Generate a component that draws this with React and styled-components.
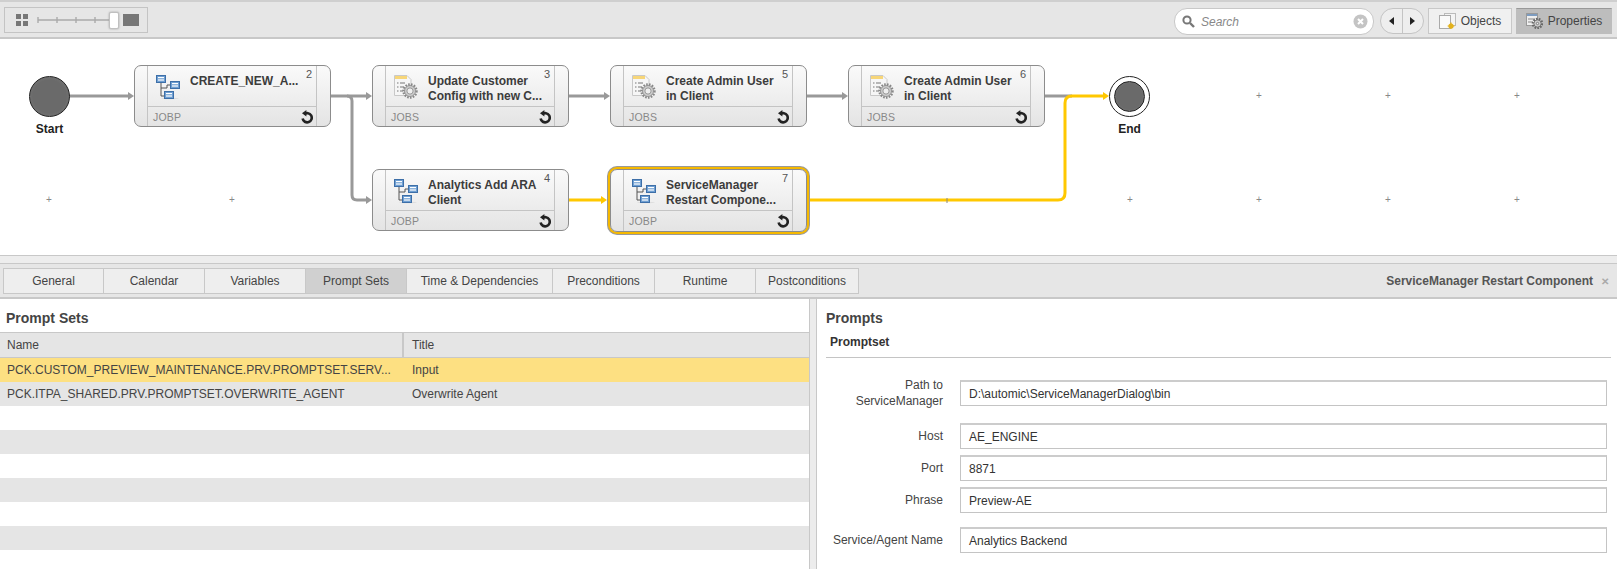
import React from 'react'
import styled, { createGlobalStyle } from 'styled-components'

const GlobalStyle = createGlobalStyle`
	html, body { margin: 0; padding: 0; background: #fff; }
	body { font-family: "Liberation Sans", Arial, sans-serif; font-size: 12px; color: #333; }
	* { box-sizing: border-box; }
`

const GREY = '#999'
const YELLOW = '#ffc800'

const nodes = [
	{ id: 2, x: 134, y: 65, lines: ['CREATE_NEW_A...'], type: 'JOBP' },
	{ id: 3, x: 372, y: 65, lines: ['Update Customer', 'Config with new C...'], type: 'JOBS' },
	{ id: 5, x: 610, y: 65, lines: ['Create Admin User', 'in Client'], type: 'JOBS' },
	{ id: 6, x: 848, y: 65, lines: ['Create Admin User', 'in Client'], type: 'JOBS' },
	{ id: 4, x: 372, y: 169, lines: ['Analytics Add ARA', 'Client'], type: 'JOBP' },
	{ id: 7, x: 610, y: 169, lines: ['ServiceManager', 'Restart Compone...'], type: 'JOBP', selected: true },
]

const plusMarks = [
	[49, 200], [232, 200], [1130, 200], [1259, 200], [1388, 200], [1517, 200],
	[1259, 96], [1388, 96], [1517, 96],
]

const tabs = ['General', 'Calendar', 'Variables', 'Prompt Sets', 'Time & Dependencies', 'Preconditions', 'Runtime', 'Postconditions']
const tabWidths = [101, 101, 101, 101, 146, 102, 101, 103]

const promptRows = [
	['PCK.CUSTOM_PREVIEW_MAINTENANCE.PRV.PROMPTSET.SERV...', 'Input'],
	['PCK.ITPA_SHARED.PRV.PROMPTSET.OVERWRITE_AGENT', 'Overwrite Agent'],
	['', ''], ['', ''], ['', ''], ['', ''], ['', ''], ['', ''], ['', ''],
]

const fields = [
	{ label: 'Path to ServiceManager', value: 'D:\\automic\\ServiceManagerDialog\\bin', gap: 14 },
	{ label: 'Host', value: 'AE_ENGINE', gap: 6 },
	{ label: 'Port', value: '8871', gap: 6 },
	{ label: 'Phrase', value: 'Preview-AE', gap: 14 },
	{ label: 'Service/Agent Name', value: 'Analytics Backend', gap: 0 },
]

const WorkflowIcon = () => (
	<svg width="25" height="25" viewBox="0 0 25 25">
		<path d="M5 8V21H9M5 13H11M15 12V9" fill="none" stroke="#555" strokeWidth="1" />
		<path d="M11 13V10H14" fill="none" stroke="#555" strokeWidth="1" />
		<ellipse cx="14" cy="23.5" rx="9" ry="0.8" fill="#ddd" />
		{[[0, 0], [14, 6], [8, 16]].map(([x, y]) => (
			<g key={x}>
				<rect x={x + 0.5} y={y + 0.5} width="9" height="7" fill="#6f9fd2" stroke="#3d6fa8" />
				<rect x={x + 2} y={y + 2} width="6" height="1.2" fill="#fff" />
				<rect x={x + 2} y={y + 4.4} width="6" height="1.2" fill="#fff" />
			</g>
		))}
	</svg>
)

const Gear = ({ cx, cy, r, color = '#888' }) => (
	<g>
		<circle cx={cx} cy={cy} r={r} fill="none" stroke={color} strokeWidth="2.4" strokeDasharray="1.6 1.2" />
		<circle cx={cx} cy={cy} r={r - 1} fill="#ccc" stroke={color} strokeWidth="0.8" />
		<circle cx={cx} cy={cy} r={r - 3.4 > 1 ? r - 3.4 : 1} fill="#eee" stroke={color} strokeWidth="0.8" />
	</g>
)

const JobIcon = () => (
	<svg width="25" height="25" viewBox="0 0 25 25">
		<path d="M0.5 0.5H13L17 4.5V20.5H0.5Z" fill="#f6f6f6" stroke="#c8c8c8" />
		<rect x="1" y="1" width="12" height="3" fill="#f7d679" />
		<path d="M3 8H4.5M6 8H11M3 12H4.5M6 12H10M3 16H4.5M6 16H9" stroke="#777" strokeWidth="1" />
		<Gear cx={16} cy={16} r={6.5} />
	</svg>
)

const RefreshIcon = () => (
	<svg width="13" height="14" viewBox="0 0 13 14">
		<path d="M3.6 3.6A4.6 4.6 0 1 1 2 8" fill="none" stroke="#222" strokeWidth="2.6" transform="translate(0.6 0.6)" />
		<path d="M6.4 0V6.6L2 3.3Z" fill="#222" />
	</svg>
)

const Connectors = () => (
	<ConnectorLayer width="1617" height="216" viewBox="0 39 1617 216">
		<g fill="none" stroke={GREY} strokeWidth="3">
			<path d="M69 96H130" />
			<path d="M331 96H368" />
			<path d="M347 96Q352 96 352 101V195Q352 200 357 200H368" />
			<path d="M569 96H606" />
			<path d="M807 96H844" />
			<path d="M1045 96H1072" />
		</g>
		<g fill={GREY}>
			<path d="M128 92L134 96L128 100Z" />
			<path d="M366 92L372 96L366 100Z" />
			<path d="M366 196L372 200L366 204Z" />
			<path d="M604 92L610 96L604 100Z" />
			<path d="M842 92L848 96L842 100Z" />
		</g>
		<g fill="none" stroke={YELLOW} strokeWidth="3">
			<path d="M569 200H602" />
			<path d="M809 200H1058Q1065 200 1065 193V103Q1065 96 1072 96H1104" />
		</g>
		<g fill={YELLOW}>
			<path d="M601 196L607 200L601 204Z" />
			<path d="M1103 92L1109 96L1103 100Z" />
		</g>
		<path d="M947 198V203" stroke="#888" strokeWidth="1" />
	</ConnectorLayer>
)

const FlowNode = ({ x, y, id, lines, type, selected }) => (
	<Node $x={x} $y={y} $selected={selected}>
		<Rail />
		<NodeMain>
			<NodeBody>
				<NodeIcon>{type === 'JOBP' ? <WorkflowIcon /> : <JobIcon />}</NodeIcon>
				<NodeTitle>{lines.map((l) => <div key={l}>{l}</div>)}</NodeTitle>
				<NodeNumber>{id}</NodeNumber>
			</NodeBody>
			<NodeFooter>
				<span>{type}</span>
				<RefreshIcon />
			</NodeFooter>
		</NodeMain>
		<Rail $right />
	</Node>
)

const App = () => {
	return (
		<Page>
			<GlobalStyle />
			<Toolbar>
				<ZoomBox>
					<svg width="12" height="12" viewBox="0 0 12 12" fill="#777">
						<rect width="5" height="5" /><rect x="7" width="5" height="5" />
						<rect y="7" width="5" height="5" /><rect x="7" y="7" width="5" height="5" />
					</svg>
					<svg width="72" height="8" viewBox="0 0 72 8">
						<path d="M1 4H72M1 1V7M20 1V7M39 1V7M58 1V7" stroke="#aaa" strokeWidth="1.4" fill="none" />
					</svg>
					<ZoomHandle />
					<ZoomBlock />
				</ZoomBox>
				<ToolbarRight>
					<SearchBox>
						<svg width="13" height="13" viewBox="0 0 13 13">
							<circle cx="5" cy="5" r="3.6" fill="none" stroke="#777" strokeWidth="2" />
							<path d="M8 8L12 12" stroke="#777" strokeWidth="2.4" />
						</svg>
						<SearchHint>Search</SearchHint>
						<svg width="15" height="15" viewBox="0 0 15 15">
							<circle cx="7.5" cy="7.5" r="7" fill="#c4c4c4" />
							<path d="M5 5L10 10M10 5L5 10" stroke="#fff" strokeWidth="2" />
						</svg>
					</SearchBox>
					<NavPill>
						<NavPart>
							<svg width="5" height="8" viewBox="0 0 5 8"><path d="M5 0V8L0 4Z" fill="#222" /></svg>
						</NavPart>
						<NavPart $last>
							<svg width="5" height="8" viewBox="0 0 5 8"><path d="M0 0V8L5 4Z" fill="#222" /></svg>
						</NavPart>
					</NavPill>
					<ToggleButton $w={84}>
						<svg width="17" height="16" viewBox="0 0 17 16">
							<rect x="5.5" y="0.5" width="11" height="12" fill="#f4f4f4" stroke="#bbb" />
							<rect x="0.5" y="2.5" width="11" height="13" fill="#fafafa" stroke="#aaa" />
							<circle cx="12" cy="13" r="2.6" fill="#e3b21c" />
							<path d="M8.6 13H15.4M12 9.6V15.9" stroke="#e3b21c" strokeWidth="1.2" />
						</svg>
						Objects
					</ToggleButton>
					<ToggleButton $w={96} $active>
						<svg width="17" height="16" viewBox="0 0 17 16">
							<rect x="0.5" y="0.5" width="11" height="12" fill="#eee" stroke="#999" />
							<rect x="1" y="1" width="10" height="2" fill="#7d9cc0" />
							<path d="M2 6H9M2 9H7" stroke="#888" />
							<Gear cx={11.5} cy={10.5} r={4.6} color="#666" />
						</svg>
						Properties
					</ToggleButton>
				</ToolbarRight>
			</Toolbar>

			<Canvas>
				<Connectors />
				{plusMarks.map(([x, y]) => <Plus key={`${x}-${y}`} $x={x} $y={y}>+</Plus>)}
				<Terminal $x={29}>
					<StartDisc />
					<TerminalLabel>Start</TerminalLabel>
				</Terminal>
				<Terminal $x={1109}>
					<EndRing><EndDisc /></EndRing>
					<TerminalLabel>End</TerminalLabel>
				</Terminal>
				{nodes.map((n) => <FlowNode key={n.id} {...n} />)}
			</Canvas>

			<Splitter><Grip /></Splitter>

			<TabStrip>
				<Tabs>
					{tabs.map((t, i) => <Tab key={t} $w={tabWidths[i]} $active={t === 'Prompt Sets'}>{t}</Tab>)}
				</Tabs>
				<ObjectName>
					ServiceManager Restart Component
					<CloseMark>✕</CloseMark>
				</ObjectName>
			</TabStrip>

			<Panes>
				<LeftPane>
					<PaneTitle>Prompt Sets</PaneTitle>
					<TableHead>
						<HeadCell $w={404}>Name</HeadCell>
						<HeadCell>Title</HeadCell>
					</TableHead>
					{promptRows.map(([name, title], i) => (
						<TableRow key={i} $selected={i === 0} $odd={i % 2 === 1}>
							<RowCell $w={404}>{name}</RowCell>
							<RowCell>{title}</RowCell>
						</TableRow>
					))}
				</LeftPane>
				<Gutter />
				<RightPane>
					<PaneTitle $flush>Prompts</PaneTitle>
					<SubTitle>Promptset</SubTitle>
					<FieldList>
						{fields.map((f) => (
							<FieldRow key={f.label} $gap={f.gap}>
								<FieldLabel>{f.label}</FieldLabel>
								<FieldValue>{f.value}</FieldValue>
							</FieldRow>
						))}
					</FieldList>
				</RightPane>
			</Panes>
		</Page>
	)
}

const Page = styled.div`
	width: 1617px;
	height: 569px;
	overflow: hidden;
	display: flex;
	flex-direction: column;
	background: #fff;
`

const Toolbar = styled.div`
	height: 39px;
	flex: none;
	display: flex;
	align-items: flex-start;
	justify-content: space-between;
	padding: 6px 5px 0 4px;
	background: #e6e6e6;
	border-top: 2px solid #cfcfcf;
	border-bottom: 2px solid #c8c8c8;
	margin-top: 0;
`

const ZoomBox = styled.div`
	width: 144px;
	height: 26px;
	margin-top: -1px;
	display: flex;
	align-items: center;
	padding-left: 11px;
	border: 1px solid #c4c4c4;
	svg:nth-child(2) { margin-left: 9px; }
`

const ZoomHandle = styled.div`
	width: 10px;
	height: 17px;
	background: #fff;
	border: 1px solid #c0c0c0;
	border-radius: 2px;
	box-shadow: 0 0 2px #999;
`

const ZoomBlock = styled.div`
	width: 16px;
	height: 12px;
	margin-left: 4px;
	background: #777;
`

const ToolbarRight = styled.div`
	display: flex;
	align-items: flex-start;
`

const SearchBox = styled.div`
	width: 200px;
	height: 27px;
	margin-right: 6px;
	padding: 0 5px 0 7px;
	display: flex;
	align-items: center;
	background: #fff;
	border: 1px solid #c8c8c8;
	border-radius: 13px;
`

const SearchHint = styled.span`
	flex: 1;
	margin-left: 6px;
	font-style: italic;
	color: #888;
`

const NavPill = styled.div`
	width: 44px;
	height: 26px;
	margin-right: 4px;
	display: flex;
	background: #eee;
	border: 1px solid #c4c4c4;
	border-radius: 13px;
`

const NavPart = styled.div`
	flex: 1;
	display: flex;
	align-items: center;
	justify-content: center;
	border-right: ${(p) => (p.$last ? 'none' : '1px solid #c4c4c4')};
`

const ToggleButton = styled.div`
	width: ${(p) => p.$w}px;
	height: 26px;
	margin-left: ${(p) => (p.$active ? 4 : 0)}px;
	display: flex;
	align-items: center;
	justify-content: center;
	gap: 5px;
	color: ${(p) => (p.$active ? '#444' : '#444')};
	background: ${(p) => (p.$active ? '#bdbdbd' : '#f0f0f0')};
	border: 1px solid ${(p) => (p.$active ? '#bdbdbd' : '#c8c8c8')};
	border-top-color: ${(p) => (p.$active ? '#999' : '#c8c8c8')};
`

const Canvas = styled.div`
	position: relative;
	height: 216px;
	flex: none;
	background: #fff;
`

const ConnectorLayer = styled.svg`
	position: absolute;
	left: 0;
	top: 0;
`

const Plus = styled.span`
	position: absolute;
	left: ${(p) => p.$x - 4}px;
	top: ${(p) => p.$y - 39 - 6}px;
	width: 8px;
	text-align: center;
	font-size: 10px;
	line-height: 12px;
	color: #888;
`

const Terminal = styled.div`
	position: absolute;
	left: ${(p) => p.$x}px;
	top: 37px;
	width: 41px;
	display: flex;
	flex-direction: column;
	align-items: center;
`

const StartDisc = styled.div`
	width: 41px;
	height: 41px;
	border-radius: 50%;
	border: 1px solid #222;
	background: radial-gradient(circle, #6a6a6a 0%, #6a6a6a 60%, #808080 100%);
`

const EndRing = styled.div`
	width: 41px;
	height: 41px;
	display: flex;
	align-items: center;
	justify-content: center;
	border-radius: 50%;
	border: 1px solid #222;
	background: #fff;
`

const EndDisc = styled.div`
	width: 31px;
	height: 31px;
	border-radius: 50%;
	border: 1px solid #222;
	background: radial-gradient(circle, #6a6a6a 0%, #6a6a6a 60%, #808080 100%);
`

const TerminalLabel = styled.div`
	margin-top: 5px;
	font-weight: bold;
	font-size: 12px;
	line-height: 14px;
	color: #222;
	white-space: nowrap;
`

const Node = styled.div`
	position: absolute;
	left: ${(p) => p.$x}px;
	top: ${(p) => p.$y - 39}px;
	width: 197px;
	height: ${(p) => (p.$selected ? 63 : 62)}px;
	display: flex;
	background: linear-gradient(#fafafa, #e4e4e4);
	border: 1px solid #8c8c8c;
	border-radius: 7px;
	box-shadow: ${(p) => (p.$selected ? '0 0 0 2px #f5b800, 0 0 0 3px #999' : 'none')};
`

const Rail = styled.div`
	width: ${(p) => (p.$right ? 14 : 13)}px;
	flex: none;
	border: 0 solid #c4c4c4;
	border-left-width: ${(p) => (p.$right ? 1 : 0)}px;
	border-right-width: ${(p) => (p.$right ? 0 : 1)}px;
`

const NodeMain = styled.div`
	flex: 1;
	min-width: 0;
	display: flex;
	flex-direction: column;
`

const NodeBody = styled.div`
	position: relative;
	height: 41px;
	flex: none;
	display: flex;
	padding: 9px 0 0 8px;
	border-bottom: 1px solid #c4c4c4;
`

const NodeIcon = styled.div`
	width: 34px;
	flex: none;
	line-height: 0;
`

const NodeTitle = styled.div`
	font-weight: bold;
	font-size: 12px;
	line-height: 15px;
	color: #3c3c3c;
	white-space: nowrap;
	margin-top: -1px;
`

const NodeNumber = styled.span`
	position: absolute;
	right: 4px;
	top: 2px;
	font-size: 11px;
	line-height: 13px;
	color: #555;
`

const NodeFooter = styled.div`
	flex: 1;
	display: flex;
	align-items: center;
	justify-content: space-between;
	padding: 0 3px 0 5px;
	font-size: 10.5px;
	letter-spacing: 0.2px;
	color: #888;
`

const Splitter = styled.div`
	height: 9px;
	flex: none;
	display: flex;
	align-items: center;
	justify-content: center;
	background: #ededed;
	border-top: 1px solid #c8c8c8;
	border-bottom: 1px solid #c8c8c8;
`

const Grip = styled.div`
	width: 22px;
	height: 3px;
	background-image: radial-gradient(#aaa 0.6px, transparent 0.7px);
	background-size: 2px 2px;
`

const TabStrip = styled.div`
	height: 35px;
	flex: none;
	display: flex;
	align-items: flex-start;
	justify-content: space-between;
	padding: 4px 8px 0 3px;
	background: #e6e6e6;
	border-bottom: 2px solid #c8c8c8;
`

const Tabs = styled.div`
	display: flex;
`

const Tab = styled.div`
	width: ${(p) => p.$w}px;
	height: 26px;
	display: flex;
	align-items: center;
	justify-content: center;
	color: #444;
	background: ${(p) => (p.$active ? '#d0d0d0' : '#eeeeee')};
	border: 1px solid #c8c8c8;
	border-left-width: ${(p) => (p.$first ? 1 : 0)}px;
	border-top-color: #c8c8c8;
	&:first-child { border-left-width: 1px; }
`

const ObjectName = styled.div`
	height: 26px;
	display: flex;
	align-items: center;
	font-weight: bold;
	color: #555;
`

const CloseMark = styled.span`
	margin-left: 8px;
	font-size: 10px;
	color: #aaa;
`

const Panes = styled.div`
	flex: 1;
	min-height: 0;
	display: grid;
	grid-template-columns: 809px 8px 1fr;
`

const LeftPane = styled.div`
	overflow: hidden;
`

const Gutter = styled.div`
	background: #ececec;
	border-left: 1px solid #c8c8c8;
	border-right: 1px solid #c8c8c8;
`

const RightPane = styled.div`
	padding: 0 6px 0 9px;
`

const PaneTitle = styled.div`
	height: 33px;
	padding: 11px 0 0 ${(p) => (p.$flush ? 0 : 6)}px;
	font-weight: bold;
	font-size: 14px;
	line-height: 16px;
	color: #444;
`

const SubTitle = styled.div`
	height: 26px;
	padding: 2px 0 0 4px;
	font-weight: bold;
	line-height: 16px;
	color: #333;
	border-bottom: 1px solid #c4c4c4;
`

const TableHead = styled.div`
	height: 26px;
	display: flex;
	background: #e5e5e5;
	border-top: 1px solid #c8c8c8;
	border-bottom: 1px solid #c8c8c8;
`

const HeadCell = styled.div`
	width: ${(p) => (p.$w ? `${p.$w}px` : 'auto')};
	flex: ${(p) => (p.$w ? 'none' : 1)};
	padding-left: ${(p) => (p.$w ? 7 : 8)}px;
	line-height: 24px;
	color: #444;
	border-right: ${(p) => (p.$w ? '2px solid #c8c8c8' : 'none')};
`

const TableRow = styled.div`
	height: 24px;
	display: flex;
	background: ${(p) => (p.$selected ? '#fde082' : p.$odd ? '#e5e5e5' : '#fff')};
`

const RowCell = styled.div`
	width: ${(p) => (p.$w ? `${p.$w}px` : 'auto')};
	flex: ${(p) => (p.$w ? 'none' : 1)};
	padding-left: ${(p) => (p.$w ? 7 : 8)}px;
	line-height: 24px;
	white-space: nowrap;
	color: #444;
`

const FieldList = styled.div`
	display: flex;
	flex-direction: column;
	padding: 19px 0 0 0;
`

const FieldRow = styled.div`
	display: flex;
	align-items: center;
	gap: 17px;
	margin-bottom: ${(p) => p.$gap}px;
`

const FieldLabel = styled.div`
	width: 117px;
	flex: none;
	text-align: right;
	line-height: 16px;
	color: #444;
`

const FieldValue = styled.div`
	width: 647px;
	height: 26px;
	padding-left: 8px;
	line-height: 24px;
	color: #333;
	background: #fff;
	border: 1px solid #c4c4c4;
	border-top: 2px solid #ccc;
`

export default App
